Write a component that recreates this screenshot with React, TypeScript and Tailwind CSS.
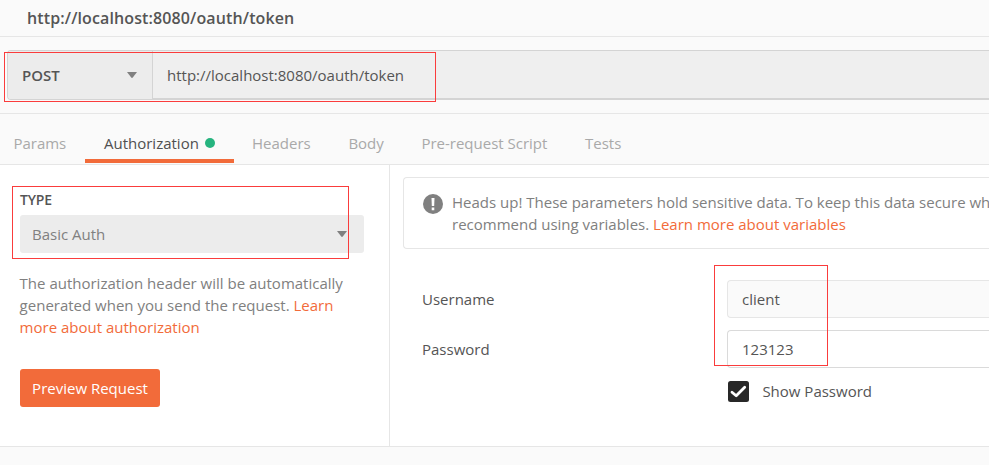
import React from "react";

const tabs = [
  { name: "Params", box: "ml-[13.4px] w-[71.6px]" },
  { name: "Authorization", box: "w-[149px] pl-[19px]", active: true },
  { name: "Headers", box: "w-[96px] pl-[18px]" },
  { name: "Body", box: "w-[73px] pl-[18.4px]" },
  { name: "Pre-request Script", box: "w-[164px] pl-[18.4px]" },
  { name: "Tests", box: "pl-[18px]" },
];

function Caret() {
  return (
    <svg width="10" height="6" viewBox="0 0 10 6" className="shrink-0 fill-[#808080]">
      <path d="M0 0H10L5.8 5.6Q5 6.4 4.2 5.6Z" />
    </svg>
  );
}

function Highlight({ box }: { box: string }) {
  return <div className={"pointer-events-none absolute border border-[#fa3c3c] " + box} />;
}

export default function App() {
  return (
    <div className="relative flex h-[465px] w-[989px] flex-col overflow-hidden bg-[#fafafa] font-['Open_Sans',sans-serif] text-[15px] leading-[22px] text-[#555555]">
      <header className="flex h-[37px] shrink-0 items-center border-b border-[#e6e6e6] pl-[27px] text-[16px] font-semibold tracking-[0.12px]">
        http://localhost:8080/oauth/token
      </header>

      <section className="h-[77px] shrink-0 border-b border-[#e6e6e6] pt-[13px] pl-[7px]">
        <div className="flex h-[50px] rounded-l-[4px] border border-r-0 border-[#d4d4d4] bg-[#efefef]">
          <div className="flex w-[145px] items-center justify-between rounded-l-[3px] border-r border-[#d4d4d4] bg-[#ececec] pr-[15px] pl-[14px] font-semibold">
            <span>POST</span>
            <Caret />
          </div>
          <div className="flex flex-1 items-center border-b border-[#d4d4d4] pl-[14px]">http://localhost:8080/oauth/token</div>
        </div>
      </section>

      <nav className="flex h-[51px] shrink-0 border-b border-[#e6e6e6] pb-px">
        {tabs.map((tab) => (
          <div
            key={tab.name}
            className={
              "flex shrink-0 items-center whitespace-nowrap border-b-4 pt-[12px] " +
              tab.box +
              (tab.active ? " border-[#f26b3a] text-[#505050]" : " border-transparent text-[#a9a9a9]")
            }
          >
            {tab.name}
            {tab.active && <span className="ml-[6px] size-[10px] rounded-full bg-[#26b47f]" />}
          </div>
        ))}
      </nav>

      <main className="flex h-[281px] shrink-0 bg-white">
        <aside className="w-[390px] shrink-0 border-r border-[#e6e6e6] pt-6 pl-5">
          <div className="text-[14px] font-semibold leading-[22px] tracking-[-0.2px]">TYPE</div>
          <div className="mt-1 flex h-[38px] w-[344px] items-center justify-between rounded-[3px] bg-[#ececec] pr-[17px] pl-3 text-[#808080]">
            <span>Basic Auth</span>
            <Caret />
          </div>
          <p className="mt-[19px] -ml-[0.4px] w-[344px] text-[#808080]">
            The authorization header will be automatically
            <br />
            generated when you send the request. <span className="text-[#f26b3a]">Learn</span>
            <br />
            <span className="text-[#f26b3a]">more about authorization</span>
          </p>
          <button className="mt-[31px] flex h-[38px] w-[140px] items-center justify-center rounded-[3px] bg-[#f26b3a] font-medium text-white">
            Preview Request
          </button>
        </aside>

        <section className="min-w-0 flex-1 overflow-hidden pt-3 pl-[13px]">
          <div className="flex h-[72px] rounded-l-[4px] border border-r-0 border-[#e6e6e6] pt-[13px] pl-[19px]">
            <svg width="20" height="20" viewBox="0 0 20 20" className="mt-[3px] shrink-0">
              <circle cx="10" cy="10" r="10" fill="#808080" />
              <path d="M8.5 4H11.5L11.2 12H8.8ZM8.7 13.6H11.3V16.2H8.7Z" fill="white" />
            </svg>
            <p className="ml-[9px] whitespace-nowrap text-[#808080]">
              Heads up! These parameters hold sensitive data. To keep this data secure while
              <br />
              recommend using variables. <span className="text-[#f26b3a]">Learn more about variables</span>
            </p>
          </div>

          <div className="mt-[31px] grid grid-cols-[305px_1fr] gap-y-3 pl-[19px]">
            <label className="self-center">Username</label>
            <div className="flex h-[38px] items-center rounded-l-[4px] border border-r-0 border-[#e6e6e6] bg-[#fafafa] pl-[14px]">client</div>
            <label className="self-center">Password</label>
            <div className="flex h-[38px] items-center rounded-l-[4px] border border-r-0 border-[#dadada] bg-white pl-[14px]">123123</div>
          </div>
          <div className="mt-[12px] flex items-start pl-[324px]">
            <svg width="23" height="23" viewBox="0 0 23 23" className="shrink-0">
              <rect x="1" y="1" width="21" height="21" rx="2.5" fill="#282828" />
              <path d="M5 12.2L9.2 15.8L17.7 7.2" fill="none" stroke="white" strokeWidth="2.8" strokeLinecap="round" strokeLinejoin="round" />
            </svg>
            <span className="ml-[12.4px]">Show Password</span>
          </div>
        </section>
      </main>
      <footer className="flex-1 border-t border-[#e6e6e6]" />

      <Highlight box="left-[4px] top-[52px] h-[50px] w-[432px]" />
      <Highlight box="left-[12px] top-[186px] h-[73px] w-[337px]" />
      <Highlight box="left-[714px] top-[265px] h-[101px] w-[114px]" />
    </div>
  );
}
